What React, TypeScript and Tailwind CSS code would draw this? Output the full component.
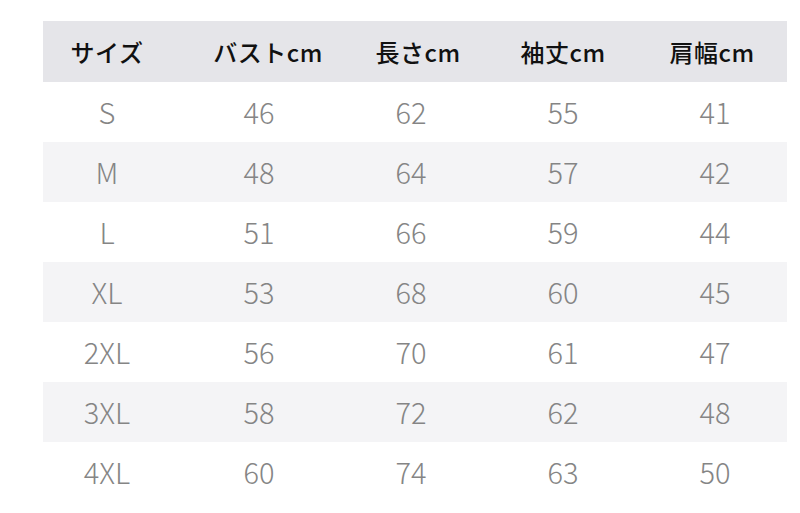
import React from "react";

const headers = ["サイズ", "バストcm", "長さcm", "袖丈cm", "肩幅cm"];
// header labels sit a little off the data column centres in the picture
const headerPad = ["", "pl-[42px]", "pl-[38px]", "pl-6", "pl-[18px]"];

const rows: string[][] = [
  ["S", "46", "62", "55", "41"],
  ["M", "48", "64", "57", "42"],
  ["L", "51", "66", "59", "44"],
  ["XL", "53", "68", "60", "45"],
  ["2XL", "56", "70", "61", "47"],
  ["3XL", "58", "72", "62", "48"],
  ["4XL", "60", "74", "63", "50"],
];

const font = { fontFamily: '"Noto Sans CJK JP", "Noto Sans", sans-serif' };

const App: React.FC = () => {
  return (
    <div className="w-[800px] h-[513px] bg-white pt-[21px] overflow-hidden" style={font}>
      <div className="ml-[43px] w-[744px] flex flex-col">
        <div className="h-[61px] bg-[#e5e5e9] grid grid-cols-[128px_152px_152px_152px_152px] items-center">
          {headers.map((h, i) => (
            <div
              key={h}
              className={`text-center text-[24px] font-medium text-[#111] tracking-[0.5px] ${headerPad[i]}`}
            >
              {h}
            </div>
          ))}
        </div>
        {rows.map((r, ri) => (
          <div
            key={r[0]}
            className={`h-[60px] grid grid-cols-[128px_152px_152px_152px_152px] items-center ${
              ri % 2 === 1 ? "bg-[#f4f4f6]" : "bg-white"
            }`}
          >
            {r.map((c, i) => (
              <div
                key={i}
                className={`text-center text-[29px] font-light text-[#858585] ${i > 0 ? "pl-6" : ""}`}
              >
                {c}
              </div>
            ))}
          </div>
        ))}
      </div>
    </div>
  );
};

export default App;
